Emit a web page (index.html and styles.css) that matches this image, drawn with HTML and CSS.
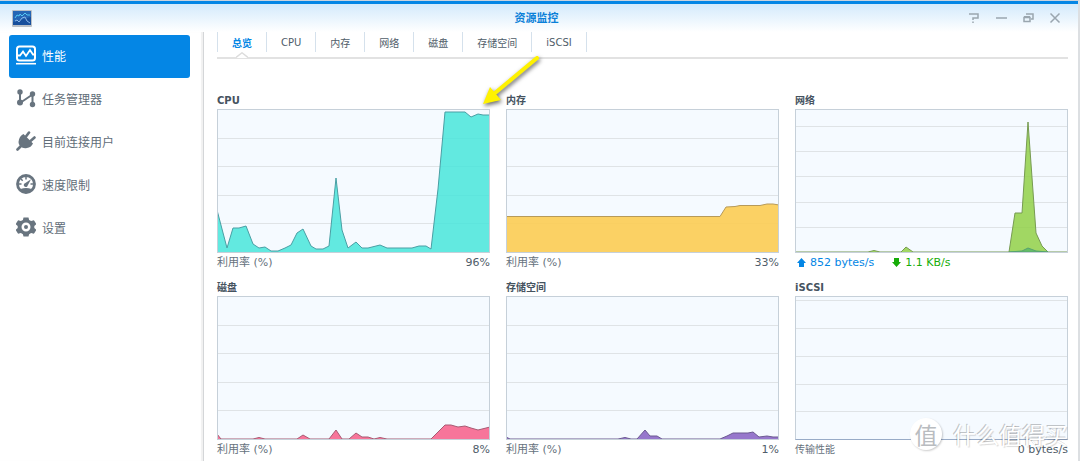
FILE: index.html
```
<!DOCTYPE html>
<html lang="zh-CN">
<head>
<meta charset="utf-8">
<title>资源监控</title>
<link rel="stylesheet" href="styles.css">
</head>
<body>
<div class="window">
  <header class="titlebar">
    <svg class="app-icon" viewBox="0 0 20 17" aria-hidden="true">
      <rect width="20" height="17" rx="1" fill="#b9bfc6"/>
      <rect x="1" y="1" width="18" height="14" fill="#174f9c"/>
      <path d="M1 1h18v6L1 12z" fill="#2566b5"/>
      <path d="M3 8l2-3 2 1 1-2 2 2 3-3 2 2 3 0" fill="none" stroke="#55c8f2"/>
      <path d="M3 11l2-1 2 2 3-4 3-1 2 4 3 2" fill="none" stroke="#8cb8e8"/>
    </svg>
    <h1 class="title">资源监控</h1>
    <div class="controls">
      <button class="control" aria-label="帮助"><svg viewBox="0 0 12 12"><path d="M1 2h9v4H5v2M5 9.500v1.500" /></svg></button>
      <button class="control" aria-label="最小化"><svg viewBox="0 0 12 12"><path d="M1 6h11"/></svg></button>
      <button class="control" aria-label="还原"><svg viewBox="0 0 12 12"><path d="M4 2h7v5h-2M2 5.500h6v4H2zM2 4.800h6"/></svg></button>
      <button class="control" aria-label="关闭"><svg viewBox="0 0 12 12"><path d="M1.500 1.500l9 9M10.500 1.500l-9 9"/></svg></button>
    </div>
  </header>
  <div class="body">
    <nav class="sidebar">
      <button class="nav-item nav-item--active">
        <svg class="nav-icon" viewBox="0 0 20 20"><rect x="1" y="1.500" width="18" height="14" rx="2.500" fill="none" stroke="currentColor" stroke-width="2"/><path d="M2 10.500h2l3-4 3 4.500 4-6 3 4.500h1" fill="none" stroke="currentColor" stroke-width="1.800"/><path d="M0 18.700h20" stroke="currentColor" stroke-width="1.600"/></svg>
        性能</button>
      <button class="nav-item">
        <svg class="nav-icon" viewBox="0 0 20 20"><path d="M4 4v11M4 15L16.500 6.500M16.500 6.500v10" fill="none" stroke="currentColor" stroke-width="2"/><g fill="currentColor"><circle cx="4" cy="4" r="2.700"/><circle cx="4" cy="14.500" r="3"/><circle cx="16.500" cy="6" r="2.700"/><circle cx="16.500" cy="16.500" r="2.700"/></g></svg>
        任务管理器</button>
      <button class="nav-item">
        <svg class="nav-icon" viewBox="0 0 20 20"><path d="M1.500 18.500l4-4M10 5.500L13 1.500M14.500 10l4-3.500" stroke="currentColor" stroke-width="2.600" stroke-linecap="round"/><path d="M7.500 3l9.500 9.500q-2 4-6 4.500-4 .8-6.500-1.500-2.800-2.700-1.500-7Q4 4.500 7.500 3z" fill="currentColor"/></svg>
        目前连接用户</button>
      <button class="nav-item">
        <svg class="nav-icon" viewBox="0 0 20 20"><circle cx="10" cy="10" r="8.500" fill="none" stroke="currentColor" stroke-width="2.800"/><path d="M3 10h2.500M5 5l1.700 1.700M10 3v2.500M17 10h-2.500" stroke="currentColor" stroke-width="1.500"/><path d="M4.500 15q5.500-2 11 0l-2 2.500h-7z" fill="currentColor"/><path d="M15 5.200l-3.300 6.300a2 2 0 1 1-2.700-2.300z" fill="currentColor"/></svg>
        速度限制</button>
      <button class="nav-item">
        <svg class="nav-icon" viewBox="0 0 20 20"><path fill="currentColor" fill-rule="evenodd" d="M7.500 .5h5l.6 2.400 2 1.100 2.800-.8L20 6.500v1L18.300 9v2l1.700 1.500v1l-2.100 3.300-2.800-.8-2 1.200-.6 2.300h-5l-.6-2.300-2-1.200-2.800.8L0 13.500v-1L1.700 11V9L0 7.500v-1l2.100-3.300 2.800.8 2-1.100zM10 5.500a4.500 4.500 0 1 0 0 9 4.500 4.500 0 0 0 0-9z"/><circle cx="10" cy="10" r="2" fill="currentColor"/></svg>
        设置</button>
    </nav>
    <main class="content">
      <div class="tabs" role="tablist">
        <button class="tab tab--active" role="tab" aria-selected="true">总览<svg class="notch" viewBox="0 0 12 6" aria-hidden="true"><path d="M0 6L6 1l6 5z" fill="#fff"/><path d="M0 5.500L6 .8l6 4.700" fill="none" stroke="#dcdcdc" stroke-width="1.400"/></svg></button>
        <button class="tab" role="tab">CPU</button>
        <button class="tab" role="tab">内存</button>
        <button class="tab" role="tab">网络</button>
        <button class="tab" role="tab">磁盘</button>
        <button class="tab" role="tab">存储空间</button>
        <button class="tab" role="tab">iSCSI</button>
      </div>
      <div class="charts">
        <section class="card">
          <h2 class="card-title">CPU</h2>
          <svg class="chart" viewBox="0 0 271 142" preserveAspectRatio="none">
            <path class="grid" d="M0 28.500h271M0 56.500h271M0 85.500h271M0 113.500h271"/>
            <path class="area cpu" d="M-1 143V100L4 119 9 138 15 118H21L28 116 35 134 41 138 47 137 53 141H60L67 138 73 135 79 123 85 119 93 136 98 139H105L111 136 118 68 124 120 130 138 138 132 144 138H150L162 135 169 138H194L201 136H208L213 139 220 79 227 2H247L253 7 260 4 265 5H272V143z"/>
          </svg>
          <div class="caption"><span class="caption-label">利用率 (%)</span><span>96%</span></div>
        </section>
        <section class="card">
          <h2 class="card-title">内存</h2>
          <svg class="chart" viewBox="0 0 271 142" preserveAspectRatio="none">
            <path class="grid" d="M0 28.500h271M0 56.500h271M0 85.500h271M0 113.500h271"/>
            <path class="area memory" d="M-1 143V106.500H213L219 97 228 96.500 233 95.500H253L260 94H266L272 95V143z"/>
          </svg>
          <div class="caption"><span class="caption-label">利用率 (%)</span><span>33%</span></div>
        </section>
        <section class="card">
          <h2 class="card-title">网络</h2>
          <svg class="chart" viewBox="0 0 271 142" preserveAspectRatio="none">
            <path class="grid" d="M0 16.500h271M0 41.500h271M0 66.500h271M0 92.500h271M0 117.500h271"/>
            <path class="area download" d="M-1 143V142H72L78 140.500 84 142H105L110 137 117 142H213L219 103H226L232 12 240 123 246 136 252 142H272V143z"/>
            <path class="area upload" d="M213 142L226 141 232 138 240 141 252 142z"/>
          </svg>
          <div class="caption caption--network">
            <span class="rate rate--up"><svg viewBox="0 0 9 9"><path d="M4.500 0L9 5H7v4H2V5H0z"/></svg>852 bytes/s</span>
            <span class="rate rate--down"><svg viewBox="0 0 9 9"><path d="M4.500 9L9 4H7V0H2v4H0z"/></svg>1.1 KB/s</span>
          </div>
        </section>
        <section class="card">
          <h2 class="card-title">磁盘</h2>
          <svg class="chart" viewBox="0 0 271 142" preserveAspectRatio="none">
            <path class="grid" d="M0 28.500h271M0 56.500h271M0 85.500h271M0 113.500h271"/>
            <path class="area disk" d="M-1 143V137L3 142H35L41 140.500 47 142H79L85 138 92 142H111L118 133 124 142H131L138 136 144 140H150L156 142 162 140.500 169 142H213L227 128H233L240 130 247 129 253 131 260 133 272 130V143z"/>
          </svg>
          <div class="caption"><span class="caption-label">利用率 (%)</span><span>8%</span></div>
        </section>
        <section class="card">
          <h2 class="card-title">存储空间</h2>
          <svg class="chart" viewBox="0 0 271 142" preserveAspectRatio="none">
            <path class="grid" d="M0 28.500h271M0 56.500h271M0 85.500h271M0 113.500h271"/>
            <path class="area storage" d="M-1 143V140L3 142H111L118 140.500 124 142H130L138 133 143 139H150L155 142H213L220 139 226 136H241L246 135 252 140 260 139 266 140H272V143z"/>
          </svg>
          <div class="caption"><span class="caption-label">利用率 (%)</span><span>1%</span></div>
        </section>
        <section class="card">
          <h2 class="card-title">iSCSI</h2>
          <svg class="chart chart--idle" viewBox="0 0 271 142" preserveAspectRatio="none">
            <path class="grid" d="M0 3.500h271M0 31.500h271M0 59.500h271M0 87.500h271M0 114.500h271"/>
          </svg>
          <div class="caption"><span class="caption-label caption-small">传输性能</span><span>0 bytes/s</span></div>
        </section>
      </div>
    </main>
  </div>
  <svg class="pointer" viewBox="0 0 70 60" aria-hidden="true"><path d="M59 7L17 42" stroke="#fff200" stroke-width="4" stroke-linecap="round"/><path d="M5 53l7-17 11 13z" fill="#fff200"/></svg>
  <div class="watermark"><span class="watermark-badge">值</span><span class="watermark-text">什么值得买</span></div>
</div>
</body>
</html>
```
FILE: styles.css
```
* { box-sizing: border-box; }

body {
  margin: 0;
  background: #fff;
  color: #505d69;
  font-family: "DejaVu Sans", "Noto Sans CJK SC", sans-serif;
  font-size: 10px;
}

button {
  margin: 0;
  padding: 0;
  border: 0;
  background: none;
  color: inherit;
  font: inherit;
}

.window {
  position: relative;
  min-height: 100vh;
  border-top: 1px solid #c9d3de;
  border-right: 2px solid #dcdfe2;
  overflow: hidden;
}

.titlebar {
  display: grid;
  grid-template-columns: 1fr auto 1fr;
  align-items: center;
  height: 31px;
  padding: 0 17px 0 12px;
  border-top: 3px solid #0486e5;
  background: linear-gradient(#d3eafc, #fff);
}

.app-icon { width: 20px; height: 17px; }

.title {
  margin: 0;
  padding-top: 2px;
  color: #0a80d8;
  font-size: 11px;
  line-height: 16px;
}

.controls {
  display: flex;
  justify-content: flex-end;
  gap: 15px;
}

.control { width: 12px; height: 12px; }

.control svg {
  display: block;
  fill: none;
  stroke: #9aa6af;
  stroke-width: 1.500;
}

.body {
  display: flex;
  min-height: calc(100vh - 32px);
}

.sidebar {
  flex: 0 0 204px;
  padding: 3px 13px 0 9px;
  border-right: 1px solid #d4d6d8;
  box-shadow: inset -2px 0 1px #f1f1f1;
}

.nav-item {
  display: flex;
  align-items: center;
  gap: 6px;
  width: 100%;
  height: 43px;
  padding: 0 0 3px 7px;
  border-radius: 3px;
  color: #616d78;
  font-size: 12px;
}

.nav-item--active {
  background: #0486e5;
  color: #fff;
}

.nav-icon { width: 20px; height: 20px; color: #68747f; }
.nav-item--active .nav-icon { color: #fff; }

.content {
  flex: 1;
  min-width: 0;
  padding: 0 10px 0 13px;
}

.tabs {
  display: flex;
  height: 27px;
  border-bottom: 2px solid #e2e2e2;
}

.tab {
  position: relative;
  height: 20px;
  padding: 0 14px;
  border-left: 1px solid #d5e1ec;
  white-space: nowrap;
}

.tab:last-child { border-right: 1px solid #d5e1ec; }

.tab--active {
  color: #0486e5;
  font-weight: bold;
}

.notch {
  position: absolute;
  top: 20px;
  left: 18px;
  width: 12px;
  height: 6px;
}

.charts {
  display: grid;
  grid-template-columns: repeat(3, 1fr);
  gap: 7px 16px;
  padding-top: 33px;
}

.card-title {
  margin: 0;
  color: #46535f;
  font-size: 10px;
  line-height: 17px;
}

.chart {
  display: block;
  width: 100%;
  height: 144px;
  border: 1px solid #c6d0d9;
  background: #f5faff;
}

.chart--idle { border-bottom-color: #98abc7; }

.grid { stroke: #dfe3e6; }
.area { stroke-width: 1; }
.cpu { fill: rgba(72, 229, 218, 0.85); stroke: #4a9fa4; }
.memory { fill: rgba(252, 204, 83, 0.9); stroke: #b79a59; }
.download { fill: rgba(146, 208, 72, 0.85); stroke: #779b52; }
.upload { fill: #65bd66; stroke: #55a270; }
.disk { fill: #f7759a; stroke: #a75b73; }
.storage { fill: #9677cc; stroke: #6b5a91; }

.caption {
  display: flex;
  justify-content: space-between;
  height: 19px;
  font-size: 11px;
  line-height: 19px;
}

.caption-label { color: #66727d; }
.caption-small { font-size: 10px; }

.caption--network {
  justify-content: flex-start;
  gap: 18px;
  padding-left: 2px;
}

.rate {
  display: flex;
  align-items: center;
  gap: 4px;
}

.rate svg { width: 9px; height: 9px; fill: currentColor; }
.rate--up { color: #0486e5; }
.rate--down { color: #16ac08; }

.pointer {
  position: absolute;
  top: 50px;
  left: 478px;
  width: 70px;
  height: 60px;
  fill: none;
  filter: drop-shadow(1px 2px 2px rgba(0, 0, 0, 0.6));
}

.watermark {
  position: absolute;
  right: 10px;
  bottom: 11px;
  display: flex;
  align-items: center;
  gap: 11px;
  color: #fff;
  font-family: "Noto Sans CJK SC", sans-serif;
  line-height: 32px;
}

.watermark-badge {
  width: 32px;
  height: 32px;
  border-radius: 50%;
  background: #fff;
  box-shadow: 1px 1px 2px rgba(0, 0, 0, 0.2);
  color: #b9bcc0;
  font-size: 23px;
  text-align: center;
}

.watermark-text {
  font-size: 23px;
  text-shadow: -1px -1px 0 rgba(0, 0, 0, 0.22), 1px 1px 1px rgba(0, 0, 0, 0.15);
}
```
